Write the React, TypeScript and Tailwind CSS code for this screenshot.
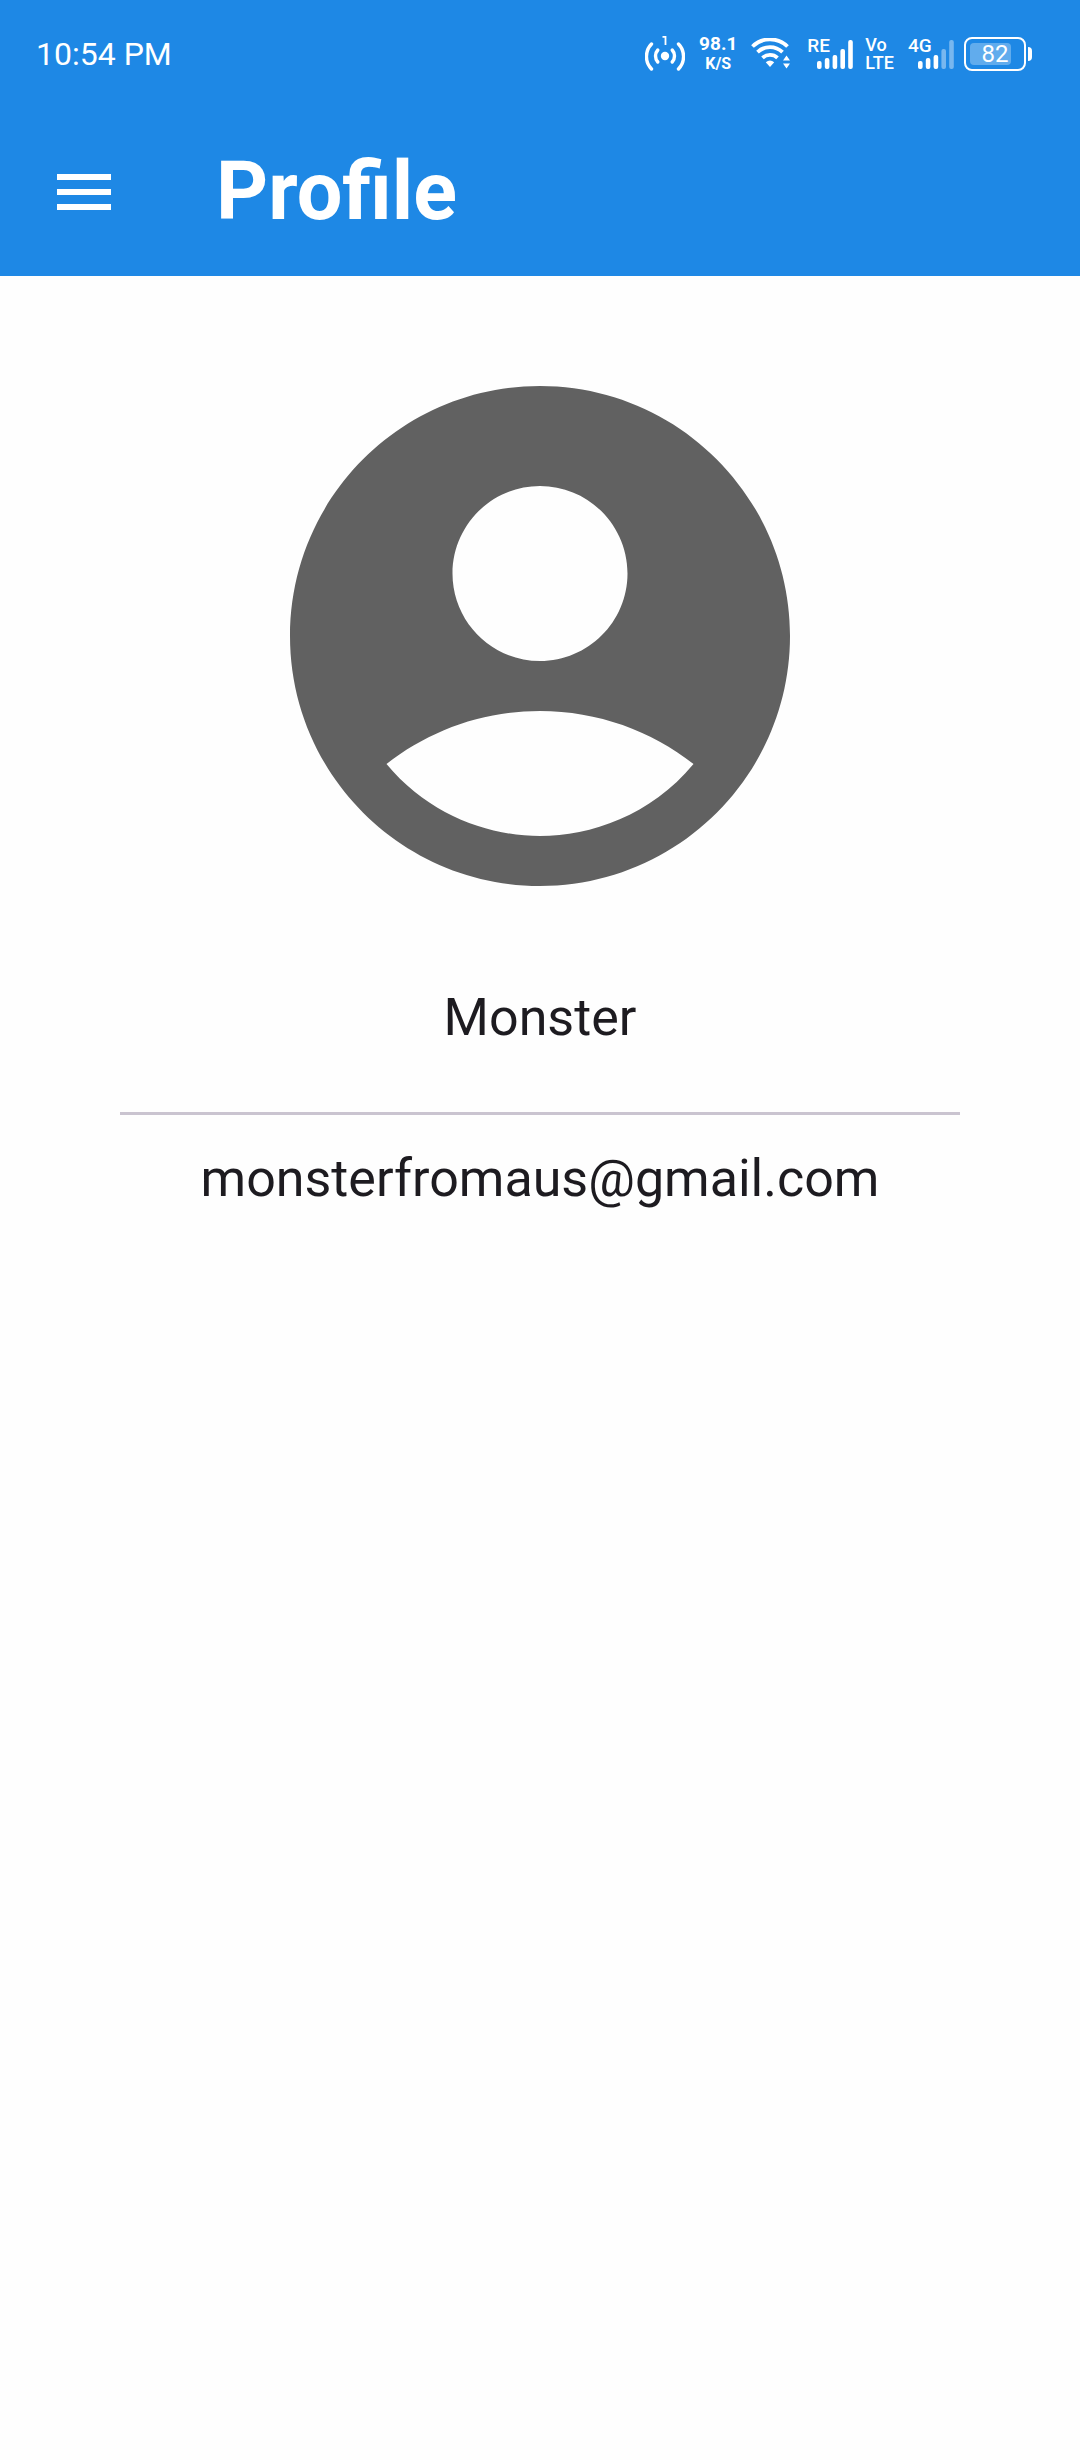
function HotspotIcon() {
  return (
    <svg className="h-9 w-10" viewBox="0 1 40 36" fill="none" stroke="currentColor" strokeWidth="3.4" strokeLinecap="round">
      <circle cx="20" cy="21" r="4.200" fill="currentColor" stroke="none" />
      <path d="M12.800 15a9 9 0 0 0 0 12M27.200 15a9 9 0 0 1 0 12" />
      <path d="M6.500 9a18 18 0 0 0 0 25M33.500 9a18 18 0 0 1 0 25" />
      <path d="M17.500 1.900H20.500V10" strokeWidth="1.800" strokeLinecap="butt" />
    </svg>
  );
}

function WifiIcon() {
  return (
    <svg className="h-8 w-10" viewBox="0 0 40 32" fill="none" stroke="currentColor" strokeWidth="3.8">
      <path d="M1.500 8.500a25 25 0 0 1 35 0" />
      <path d="M6.500 14.200a18 18 0 0 1 25 0" />
      <path d="M11.500 19.800a11 11 0 0 1 15 0" />
      <path d="M14.800 24.200q4.200-3.200 8.400 0L19 29z" fill="currentColor" stroke="none" />
      <path d="M35.500 17.500l3.500 5h-7zM35.500 30.500l3.500-5h-7z" fill="currentColor" stroke="none" />
    </svg>
  );
}

function SignalIcon({ label, level }: { label: string; level: number }) {
  const tops = [22, 19, 16, 10, 1];
  return (
    <div className="relative h-8 w-[46px]">
      <span className="absolute -top-1 left-0 text-[19px] leading-6 font-medium">{label}</span>
      <svg className="absolute right-0 bottom-0 h-8 w-9" viewBox="0 0 36 32" fill="currentColor">
        {tops.map((top, i) => (
          <rect key={top} x={i * 7.8} y={top + 1} width="4.600" height={30 - top} rx="2" opacity={i < level ? 1 : 0.4} />
        ))}
      </svg>
    </div>
  );
}

function Battery({ percent }: { percent: number }) {
  return (
    <div className="flex items-center gap-0.5">
      <div className="relative h-[34px] w-[62px] rounded-lg border-2 border-white p-1">
        <div className="h-full rounded-sm bg-white/30" style={{ width: `${percent}%` }} />
        <span className="absolute inset-0 flex items-center justify-center text-2xl">{percent}</span>
      </div>
      <div className="h-3.5 w-1 rounded-r-sm bg-white" />
    </div>
  );
}

function StatusBar() {
  return (
    <div className="flex h-27 items-center justify-between pr-12 pl-9">
      <time className="text-[32px] leading-10">10:54 PM</time>
      <div className="flex items-center">
        <HotspotIcon />
        <div className="ml-3.5 flex flex-col items-center font-bold">
          <span className="text-[19px] leading-5">98.1</span>
          <span className="text-base leading-5">K/S</span>
        </div>
        <div className="ml-3.5">
          <WifiIcon />
        </div>
        <div className="ml-4">
          <SignalIcon label="RE" level={5} />
        </div>
        <div className="ml-3 flex flex-col text-lg leading-[18px] font-medium">
          <span>Vo</span>
          <span>LTE</span>
        </div>
        <div className="ml-3.5">
          <SignalIcon label="4G" level={3} />
        </div>
        <div className="ml-2.5">
          <Battery percent={82} />
        </div>
      </div>
    </div>
  );
}

function AppBar() {
  return (
    <div className="flex h-42 items-center pl-14">
      <button type="button" aria-label="Open menu" className="flex w-14 flex-col gap-[9px] px-px">
        <span className="h-1.5 w-full bg-white" />
        <span className="h-1.5 w-full bg-white" />
        <span className="h-1.5 w-full bg-white" />
      </button>
      <h1 className="ml-26 text-[81px] leading-24 font-bold">Profile</h1>
    </div>
  );
}

export default function App() {
  return (
    <div className="min-h-screen bg-[#fefefe] font-[Roboto,sans-serif] text-[#1d1b20]">
      <header className="bg-[#1e88e5] text-white">
        <StatusBar />
        <AppBar />
      </header>
      <main className="flex flex-col items-center px-30 pt-15">
        <svg className="size-150 text-[#616161]" viewBox="0 0 24 24" fill="currentColor" role="img" aria-label="Profile picture">
          <path d="M12 2C6.480 2 2 6.480 2 12s4.480 10 10 10 10-4.480 10-10S17.520 2 12 2zM12 6c1.930 0 3.500 1.570 3.500 3.500S13.930 13 12 13s-3.500-1.570-3.500-3.500S10.070 6 12 6zM12 20c-2.030 0-4.430-.820-6.140-2.880C7.550 15.800 9.680 15 12 15s4.450.8 6.140 2.120C16.430 19.180 14.030 20 12 20z" />
        </svg>
        <p className="mt-[50px] text-[52px] leading-16">Monster</p>
        <hr className="mt-[62px] w-full border-t-3 border-[#cac4d0]" />
        <p className="mt-8 text-[52px] leading-16">monsterfromaus@gmail.com</p>
      </main>
    </div>
  );
}
